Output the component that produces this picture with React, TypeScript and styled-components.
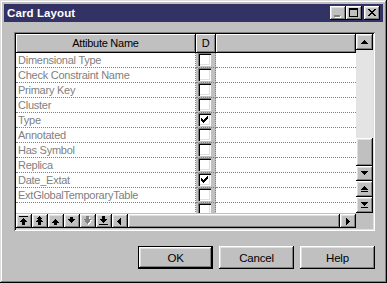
import styled, { createGlobalStyle } from 'styled-components';

const GlobalStyle = createGlobalStyle`
  html, body {
    margin: 0;
    padding: 0;
    background: #c0c0c0;
  }
  body {
    font-family: "Liberation Sans", Arial, sans-serif;
  }
`;

const raised = `
  box-shadow: inset -1px -1px #000, inset 1px 1px #fff, inset -2px -2px #808080, inset 2px 2px #dfdfdf;
`;

// pixel path helpers
const rect = (x: number, y: number, w: number, h: number) => `M${x} ${y}h${w}v${h}h-${w}z`;
const up = (cx: number, top: number, n: number) =>
  Array.from({ length: n }, (_, i) => rect(cx - i, top + i, 2 * i + 1, 1)).join('');
const down = (cx: number, top: number, n: number) =>
  Array.from({ length: n }, (_, i) => rect(cx - (n - 1 - i), top + i, 2 * (n - 1 - i) + 1, 1)).join('');
const left = (lx: number, cy: number, n: number) =>
  Array.from({ length: n }, (_, i) => rect(lx + i, cy - i, 1, 2 * i + 1)).join('');
const right = (lx: number, cy: number, n: number) =>
  Array.from({ length: n }, (_, i) => rect(lx + i, cy - (n - 1 - i), 1, 2 * (n - 1 - i) + 1)).join('');

const Window = styled.div`
  box-sizing: border-box;
  width: 387px;
  height: 283px;
  padding: 4px;
  background: #c0c0c0;
  box-shadow: inset -1px -1px #000, inset 1px 1px #dfdfdf, inset -2px -2px #808080, inset 2px 2px #fff;
  display: flex;
  flex-direction: column;
`;

const TitleBar = styled.div`
  height: 18px;
  background: #323264;
  display: flex;
  align-items: center;
  justify-content: space-between;
  padding: 0 3px;
`;

const Title = styled.span`
  color: #fff;
  font-weight: bold;
  font-size: 11.5px;
  letter-spacing: 0.1px;
`;

const TitleButtons = styled.div`
  display: flex;
`;

const TitleButton = styled.div<{ $gap?: boolean }>`
  width: 16px;
  height: 14px;
  background: #c0c0c0;
  margin-left: ${({ $gap }) => ($gap ? '2px' : '0')};
  ${raised}
  svg {
    display: block;
  }
`;

const Body = styled.div`
  padding: 10px 8px 0 10px;
  display: flex;
  flex-direction: column;
`;

const Frame = styled.div`
  box-sizing: border-box;
  width: 361px;
  height: 199px;
  padding: 2px;
  background: #c0c0c0;
  box-shadow: inset 1px 1px #808080, inset -1px -1px #fff, inset 2px 2px #000, inset -2px -2px #dfdfdf;
  display: grid;
  grid-template-columns: 340px 17px;
  grid-template-rows: 179px 16px;
`;

const Table = styled.div`
  display: flex;
  flex-direction: column;
  overflow: hidden;
`;

const columns = `grid-template-columns: 180px 20px 140px;`;

const HeaderRow = styled.div`
  display: grid;
  ${columns}
  height: 19px;
  flex-shrink: 0;
`;

const HeaderCell = styled.div`
  box-sizing: border-box;
  border-right: 1px solid #000;
  border-bottom: 1px solid #000;
  box-shadow: inset 1px 1px #fff, inset -1px -1px #808080;
  background: #c0c0c0;
  display: flex;
  align-items: center;
  justify-content: center;
  font-size: 11px;
  letter-spacing: -0.25px;
  color: #000;
`;

const Row = styled.div`
  display: grid;
  ${columns}
  height: 15px;
  flex-shrink: 0;
`;

const NameCell = styled.div`
  box-sizing: border-box;
  background: #fff;
  border-right: 1px dotted #808080;
  border-bottom: 1px dotted #808080;
  color: #808080;
  font-size: 11px;
  letter-spacing: -0.25px;
  line-height: 14px;
  padding-left: 2px;
  white-space: nowrap;
  overflow: hidden;
`;

const CheckCell = styled.div`
  box-sizing: border-box;
  background: #c0c0c0;
  border-right: 1px dotted #808080;
  border-bottom: 1px dotted #808080;
  padding-left: 2px;
`;

const BlankCell = styled.div`
  box-sizing: border-box;
  background: #fff;
  border-bottom: 1px dotted #808080;
`;

const CheckBox = styled.div`
  width: 13px;
  height: 13px;
  background: #fff;
  box-shadow: inset 1px 1px #808080, inset 2px 2px #000, inset -1px -1px #fff, inset -2px -2px #dfdfdf;
  svg {
    display: block;
  }
`;

const BottomBar = styled.div`
  display: flex;
  padding: 1px 0;
  background: #c0c0c0;
`;

const SmallButton = styled.div`
  width: 16px;
  height: 14px;
  flex-shrink: 0;
  background: #c0c0c0;
  ${raised}
  svg {
    display: block;
  }
`;

const HThumb = styled.div`
  flex: 1;
  height: 14px;
  background: #c0c0c0;
  ${raised}
`;

const VScroll = styled.div`
  display: flex;
  flex-direction: column;
`;

const VButton = styled.div<{ $h: number }>`
  height: ${({ $h }) => $h}px;
  background: #c0c0c0;
  ${raised}
  display: flex;
  align-items: center;
  justify-content: center;
  svg {
    display: block;
  }
`;

const VTrack = styled.div<{ $h: number }>`
  height: ${({ $h }) => $h}px;
  background: #e4e4e4;
`;

const Corner = styled.div`
  background: #c0c0c0;
`;

const ButtonRow = styled.div`
  display: flex;
  justify-content: flex-end;
  gap: 6px;
  margin-top: 15px;
`;

const DialogButton = styled.button<{ $default?: boolean }>`
  box-sizing: border-box;
  width: 75px;
  height: 23px;
  padding: 0;
  border: ${({ $default }) => ($default ? '1px solid #000' : 'none')};
  background: #c0c0c0;
  ${raised}
  font-family: "Liberation Sans", Arial, sans-serif;
  font-size: 11.5px;
  letter-spacing: -0.2px;
  color: #000;
`;

function Glyph({ d, w = 16, h = 14, color = '#000', shadow }: { d: string; w?: number; h?: number; color?: string; shadow?: boolean }) {
  return (
    <svg width={w} height={h} viewBox={`0 0 ${w} ${h}`} shapeRendering="crispEdges">
      {shadow && <path d={d} fill="#fff" transform="translate(1 1)" />}
      <path d={d} fill={color} />
    </svg>
  );
}

const checkPath = [
  rect(3, 5, 1, 3),
  rect(4, 6, 1, 3),
  rect(5, 7, 1, 3),
  rect(6, 6, 1, 3),
  rect(7, 5, 1, 3),
  rect(8, 4, 1, 3),
  rect(9, 3, 1, 3),
].join('');

const minPath = rect(4, 9, 6, 2);
const maxPath = rect(3, 2, 9, 2) + rect(3, 4, 1, 6) + rect(11, 4, 1, 6) + rect(3, 10, 9, 1);
const closePath = [
  rect(4, 3, 2, 1), rect(10, 3, 2, 1),
  rect(5, 4, 2, 1), rect(9, 4, 2, 1),
  rect(6, 5, 4, 1),
  rect(7, 6, 2, 1),
  rect(6, 7, 4, 1),
  rect(5, 8, 2, 1), rect(9, 8, 2, 1),
  rect(4, 9, 2, 1), rect(10, 9, 2, 1),
].join('');

const toolIcons: { d: string; disabled?: boolean }[] = [
  { d: rect(3, 2, 9, 1) + up(7, 4, 4) + rect(6, 8, 3, 3) },
  { d: up(7, 2, 3) + up(7, 4, 4) + rect(6, 8, 3, 3) },
  { d: up(7, 5, 4) + rect(6, 9, 3, 2) },
  { d: rect(6, 3, 3, 2) + down(7, 5, 4) },
  { d: rect(6, 2, 3, 3) + down(7, 5, 4) + down(7, 7, 3), disabled: true },
  { d: rect(6, 2, 3, 3) + down(7, 5, 4) + rect(3, 10, 9, 1) },
];

const rows: { name: string; checked: boolean }[] = [
  { name: 'Dimensional Type', checked: false },
  { name: 'Check Constraint Name', checked: false },
  { name: 'Primary Key', checked: false },
  { name: 'Cluster', checked: false },
  { name: 'Type', checked: true },
  { name: 'Annotated', checked: false },
  { name: 'Has Symbol', checked: false },
  { name: 'Replica', checked: false },
  { name: 'Date_Extat', checked: true },
  { name: 'ExtGlobalTemporaryTable', checked: false },
  { name: '', checked: false },
];

export default function App() {
  return (
    <>
      <GlobalStyle />
      <Window>
        <TitleBar>
          <Title>Card Layout</Title>
          <TitleButtons>
            <TitleButton>
              <Glyph d={minPath} color="#808080" shadow />
            </TitleButton>
            <TitleButton>
              <Glyph d={maxPath} />
            </TitleButton>
            <TitleButton $gap>
              <Glyph d={closePath} />
            </TitleButton>
          </TitleButtons>
        </TitleBar>
        <Body>
          <Frame>
            <Table>
              <HeaderRow>
                <HeaderCell>Attibute Name</HeaderCell>
                <HeaderCell>D</HeaderCell>
                <HeaderCell />
              </HeaderRow>
              {rows.map((r, i) => (
                <Row key={i}>
                  <NameCell>{r.name}</NameCell>
                  <CheckCell>
                    <CheckBox>
                      {r.checked && <Glyph d={checkPath} w={13} h={13} />}
                    </CheckBox>
                  </CheckCell>
                  <BlankCell />
                </Row>
              ))}
            </Table>
            <VScroll>
              <VButton $h={16}>
                <Glyph d={up(8, 6, 4)} w={17} h={16} />
              </VButton>
              <VTrack $h={88} />
              <VButton $h={28} />
              <VButton $h={15}>
                <Glyph d={down(8, 5, 4)} w={17} h={15} />
              </VButton>
              <VButton $h={16}>
                <Glyph d={up(8, 5, 4) + rect(5, 10, 7, 1)} w={17} h={16} />
              </VButton>
              <VButton $h={16}>
                <Glyph d={down(8, 5, 4) + rect(5, 10, 7, 1)} w={17} h={16} />
              </VButton>
            </VScroll>
            <BottomBar>
              {toolIcons.map((t, i) => (
                <SmallButton key={i}>
                  <Glyph d={t.d} color={t.disabled ? '#808080' : '#000'} shadow={t.disabled} />
                </SmallButton>
              ))}
              <SmallButton>
                <Glyph d={left(5, 7, 4)} />
              </SmallButton>
              <HThumb />
              <SmallButton>
                <Glyph d={right(6, 7, 4)} />
              </SmallButton>
            </BottomBar>
            <Corner />
          </Frame>
          <ButtonRow>
            <DialogButton $default>OK</DialogButton>
            <DialogButton>Cancel</DialogButton>
            <DialogButton>Help</DialogButton>
          </ButtonRow>
        </Body>
      </Window>
    </>
  );
}
